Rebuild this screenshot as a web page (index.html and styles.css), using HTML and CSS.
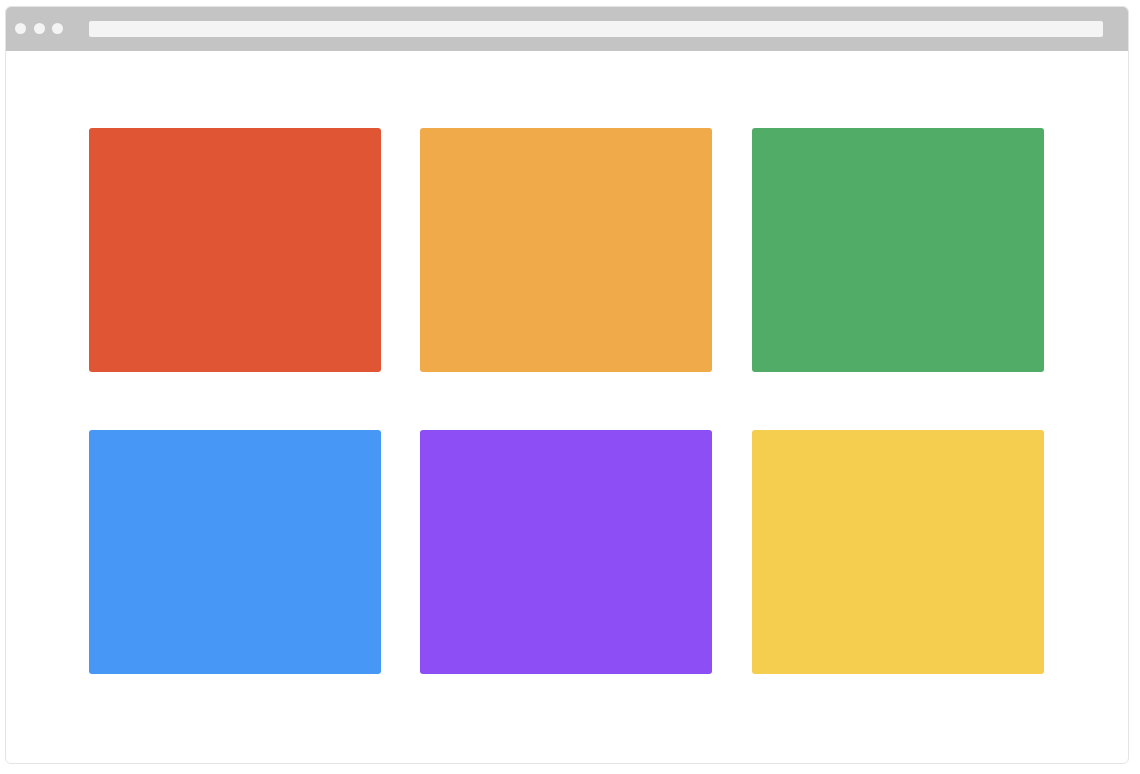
FILE: index.html
```html
<!DOCTYPE html>
<html>
<head>
<meta charset="utf-8">
<link rel="stylesheet" href="styles.css">
</head>
<body>
<div class="window">
  <div class="titlebar">
    <div class="dots"><span class="dot"></span><span class="dot"></span><span class="dot"></span></div>
    <div class="address"></div>
  </div>
  <div class="content">
    <div class="grid">
      <div class="tile red"></div>
      <div class="tile orange"></div>
      <div class="tile green"></div>
      <div class="tile blue"></div>
      <div class="tile purple"></div>
      <div class="tile yellow"></div>
    </div>
  </div>
</div>
</body>
</html>
```

FILE: styles.css
```css
html, body { margin: 0; padding: 0; background: #fff; }
body { font-family: "Liberation Sans", Arial, sans-serif; }
.window {
  margin: 6px 0 0 5px;
  width: 1124px;
  height: 758px;
  box-sizing: border-box;
  border: 1.5px solid #e4e4e4;
  border-radius: 6px;
  overflow: hidden;
  display: flex;
  flex-direction: column;
}
.titlebar {
  height: 45px;
  background: #c4c4c4;
  display: flex;
  align-items: center;
  padding: 1px 27px 0 10.5px;
  box-sizing: border-box;
  gap: 26px;
  flex-shrink: 0;
  margin: -1.5px -1.5px 0 -1.5px;
}
.dots { display: flex; gap: 7.5px; }
.dot { width: 11px; height: 11px; border-radius: 50%; background: #f4f4f4; display: block; }
.address {
  flex: 1;
  height: 16px;
  background: #f4f4f4;
  border-radius: 2px;
}
.content {
  flex: 1;
  padding: 77px 0 0 82.5px;
}
.grid {
  display: grid;
  grid-template-columns: repeat(3, 292px);
  grid-auto-rows: 244px;
  column-gap: 39.5px;
  row-gap: 58px;
}
.tile { border-radius: 3px; }
.red { background: #e05534; }
.orange { background: #f1aa4a; }
.green { background: #50ac67; }
.blue { background: #4697f6; }
.purple { background: #8e4ef6; }
.yellow { background: #f5ce50; }
```
